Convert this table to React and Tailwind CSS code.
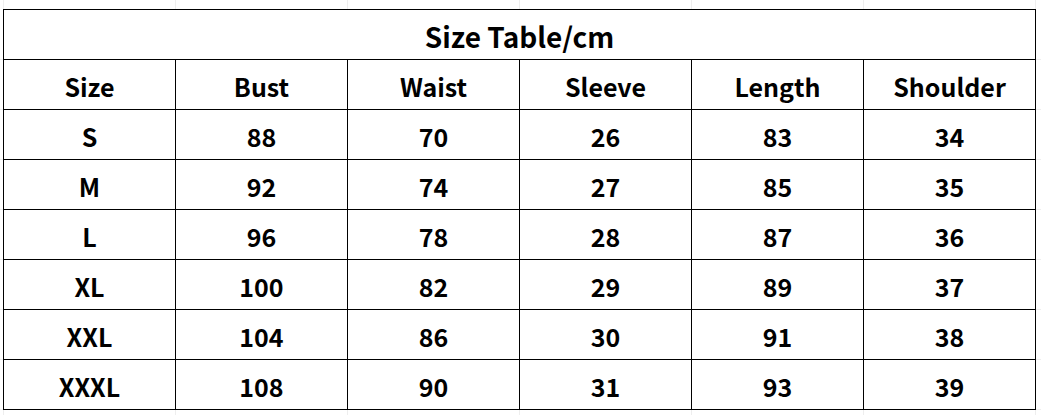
import React from "react";

const headers = ["Size", "Bust", "Waist", "Sleeve", "Length", "Shoulder"];
const rows = [
  ["S", "88", "70", "26", "83", "34"],
  ["M", "92", "74", "27", "85", "35"],
  ["L", "96", "78", "28", "87", "36"],
  ["XL", "100", "82", "29", "89", "37"],
  ["XXL", "104", "86", "30", "91", "38"],
  ["XXXL", "108", "90", "31", "93", "39"],
];

const font = { fontFamily: '"Noto Sans CJK SC", "Noto Sans", sans-serif' };

function Cell({ children }) {
  return (
    <div className="h-[50px] border-r border-b border-black flex items-center justify-center pt-[3px] text-[25px] font-bold text-black leading-none">
      {children}
    </div>
  );
}

export default function App() {
  return (
    <div className="w-[1041px] h-[415px] bg-white overflow-hidden" style={font}>
      <div className="flex h-[9px] pl-[3px]">
        <div className="flex border-l border-[#eeeeee]">
          {headers.map((h) => (
            <div key={h} className="w-[172px] border-r border-[#eeeeee]" />
          ))}
        </div>
      </div>
      <div className="flex">
        <div className="w-[3px] flex flex-col pt-[1px]">
          {Array.from({ length: 8 }).map((_, i) => (
            <div key={i} className="h-[50px] border-b border-[#eeeeee]" />
          ))}
        </div>
        <div className="border-l border-t border-black w-[1033px]">
          <div className="h-[50px] border-r border-b border-black flex items-center justify-center pt-[2px] text-[28px] font-bold text-black leading-none">
            Size Table/cm
          </div>
          <div className="grid grid-cols-[repeat(6,172px)]">
            {headers.map((h) => (
              <Cell key={h}>{h}</Cell>
            ))}
            {rows.map((r) =>
              r.map((v, j) => <Cell key={r[0] + j}>{v}</Cell>)
            )}
          </div>
        </div>
        <div className="w-[5px] flex flex-col pt-[1px]">
          {Array.from({ length: 8 }).map((_, i) => (
            <div key={i} className="h-[50px] border-b border-[#eeeeee]" />
          ))}
        </div>
      </div>
      <div className="flex h-[6px] pl-[3px]">
        <div className="flex border-l border-[#eeeeee]">
          {headers.map((h) => (
            <div key={h} className="w-[172px] border-r border-[#eeeeee]" />
          ))}
        </div>
      </div>
    </div>
  );
}
